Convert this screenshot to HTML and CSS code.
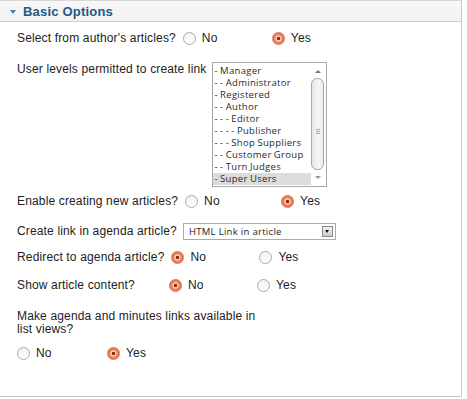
FILE: index.html
```html
<!DOCTYPE html>
<html lang="en">
<head>
  <meta charset="UTF-8">
  <title>Basic Options</title>
  <link rel="stylesheet" href="styles.css">
</head>
<body>
  <div class="panel">
    <div class="panel-head">
      <span class="caret"></span>
      <h3>Basic Options</h3>
    </div>
    <div class="panel-body">

      <div class="row r1">
        <label class="lbl lbl-auto">Select from author's articles?</label>
        <span class="opt"><span class="radio"></span>No</span>
        <span class="opt"><span class="radio on"></span>Yes</span>
      </div>

      <div class="row r2 top">
        <label class="lbl">User levels permitted to create link</label>
        <div class="listbox">
          <ul class="items">
            <li>- Manager</li>
            <li>- - Administrator</li>
            <li>- Registered</li>
            <li>- - Author</li>
            <li>- - - Editor</li>
            <li>- - - - Publisher</li>
            <li>- - - Shop Suppliers</li>
            <li>- - Customer Group</li>
            <li>- - Turn Judges</li>
            <li class="sel">- Super Users</li>
          </ul>
          <div class="scrollbar">
            <span class="arrow up"></span>
            <div class="track"><div class="thumb"><span class="grip"></span></div></div>
            <span class="arrow down"></span>
          </div>
        </div>
      </div>

      <div class="row r3">
        <label class="lbl lbl-auto">Enable creating new articles?</label>
        <span class="opt wide"><span class="radio"></span>No</span>
        <span class="opt"><span class="radio on"></span>Yes</span>
      </div>

      <div class="row r4">
        <label class="lbl lbl-auto">Create link in agenda article?</label>
        <div class="dropdown">
          <span class="dd-text">HTML Link in article</span>
          <span class="dd-btn"></span>
        </div>
      </div>

      <div class="row r5">
        <label class="lbl lbl-auto">Redirect to agenda article?</label>
        <span class="opt"><span class="radio on"></span>No</span>
        <span class="opt"><span class="radio"></span>Yes</span>
      </div>

      <div class="row r6">
        <label class="lbl lbl-fixed">Show article content?</label>
        <span class="opt"><span class="radio on"></span>No</span>
        <span class="opt"><span class="radio"></span>Yes</span>
      </div>

      <p class="lbl-block">Make agenda and minutes links available in<br>list views?</p>
      <div class="row r7">
        <span class="opt last"><span class="radio"></span>No</span>
        <span class="opt"><span class="radio on"></span>Yes</span>
      </div>

    </div>
  </div>
</body>
</html>
```

FILE: styles.css
```css
/* page */
body {
  margin: 0;
  background-color: #fff;
  font-family: "Liberation Sans", Arial, sans-serif;
  font-size: 12px;
  letter-spacing: 0.15px;
  color: #222;
}
.panel {
  width: 462px;
  height: 397px;
  border-top: 1px solid #d8d8d8;
  border-right: 1px solid #c8c8c8;
  border-bottom: 1px solid #c8c8c8;
  box-sizing: border-box;
}

/* header */
.panel-head {
  display: flex;
  align-items: center;
  height: 20px;
  padding-left: 10px;
  background: linear-gradient(#f8f8f8, #f1f1f1);
  border-bottom: 1px solid #cfcfcf;
}
.caret {
  width: 0;
  height: 0;
  border-left: 3px solid transparent;
  border-right: 3px solid transparent;
  border-top: 4px solid #3c7fb8;
  margin-right: 7px;
  margin-top: 1px;
}
.panel-head h3 {
  margin: 0;
  font-size: 13px;
  font-weight: bold;
  letter-spacing: 0.2px;
  color: #215a89;
}

/* rows */
.panel-body {
  padding-left: 17px;
}
.row {
  display: flex;
  align-items: center;
  height: 20px;
}
.row.top {
  align-items: flex-start;
  height: auto;
}
.r1 { margin-top: 6px; }
.r2 { margin-top: 14px; }
.r3 { margin-top: 4px; }
.r4 { margin-top: 10px; }
.r5 { margin-top: 6px; }
.r6 { margin-top: 8px; }
.r7 { margin-top: 7px; }

.lbl {
  flex: none;
}
.lbl-auto {
  margin-right: 7px;
}
.r2 .lbl {
  line-height: 14px;
  margin-right: 6px;
}
.lbl-fixed {
  width: 152px;
}
.lbl-block {
  margin: 15px 0 0;
  line-height: 13px;
}

/* radios */
.opt {
  display: flex;
  align-items: center;
  width: 88px;
}
.opt.wide {
  width: 96px;
}
.opt.last {
  width: 90px;
}
.r1 .opt:first-of-type {
  width: 89px;
}
.radio {
  width: 11px;
  height: 11px;
  border: 1px solid #a9a9a9;
  border-radius: 50%;
  background: linear-gradient(#f2f2f2, #fff);
  margin-right: 6px;
}
.radio.on {
  border-color: #d9714c;
  background: radial-gradient(circle, #8a2f17 0 1.4px, #f7c8b0 2px 2.8px, #ee8a66 3.4px, #e2724c 6px);
}

/* listbox */
.listbox {
  display: flex;
  width: 115px;
  height: 125px;
  border: 1px solid #a8a8a8;
  box-sizing: border-box;
  background-color: #fff;
}
.items {
  flex: 1;
  min-width: 0;
  list-style: none;
  margin: 0;
  padding: 2px 0 0;
  font-family: "Open Sans", sans-serif;
  font-size: 9.5px;
  letter-spacing: 0.3px;
  word-spacing: -0.5px;
  color: #2a2a2a;
}
.items li {
  height: 12px;
  line-height: 12px;
  padding-left: 1px;
  white-space: nowrap;
  overflow: hidden;
}
.items li.sel {
  background-color: #dcdcdc;
}
.scrollbar {
  display: flex;
  flex-direction: column;
  width: 13px;
  margin: 2px 2px 2px 0;
}
.arrow {
  height: 13px;
  position: relative;
}
.arrow::after {
  content: "";
  position: absolute;
  left: 4px;
  top: 5px;
  border-left: 3px solid transparent;
  border-right: 3px solid transparent;
}
.arrow.up::after { border-bottom: 3px solid #777; }
.arrow.down::after { border-top: 3px solid #999; }
.track {
  flex: 1;
  display: flex;
}
.thumb {
  flex: 1;
  margin: 0 0 1px;
  border: 1px solid #a8a8a8;
  border-radius: 6px;
  background: linear-gradient(90deg, #e6e6e6, #f7f7f7 60%, #e8e8e8);
  display: flex;
  align-items: center;
  justify-content: center;
}
.grip {
  width: 4px;
  height: 6px;
  background: repeating-linear-gradient(#aaa 0 1px, transparent 1px 2px);
  margin-top: 16px;
}

/* dropdown */
.dropdown {
  display: flex;
  align-items: center;
  width: 153px;
  height: 17px;
  border: 1px solid #aaa;
  box-sizing: border-box;
  padding-left: 5px;
  margin-left: -1px;
}
.dd-text {
  flex: 1;
  font-family: "Open Sans", sans-serif;
  font-size: 9.5px;
  letter-spacing: 0.3px;
  color: #222;
}
.dd-btn {
  width: 11px;
  height: 11px;
  margin-right: 2px;
  border: 1px solid #888;
  background: linear-gradient(#f4f4f4, #ccc);
  box-sizing: border-box;
  position: relative;
}
.dd-btn::after {
  content: "";
  position: absolute;
  left: 2px;
  top: 3px;
  border-left: 2.5px solid transparent;
  border-right: 2.5px solid transparent;
  border-top: 3px solid #111;
}
```
